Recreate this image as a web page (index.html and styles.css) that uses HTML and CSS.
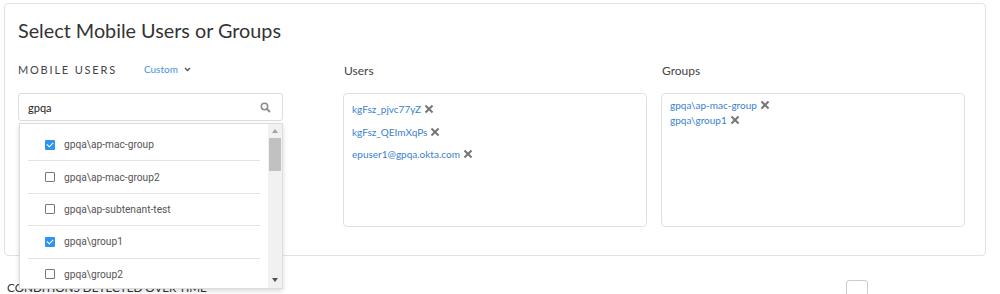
FILE: index.html
```html
<!DOCTYPE html>
<html lang="en">
<head>
    <meta charset="UTF-8">
    <meta name="viewport" content="width=device-width, initial-scale=1.0">
    <title>Select Mobile Users or Groups</title>
    <link rel="stylesheet" href="styles.css">
</head>
<body>

    <div class="card">
        <h2>Select Mobile Users or Groups</h2>

        <div class="columns">
            <div class="col col-mobile">
                <div class="label-row">
                    <span class="caps-label">MOBILE USERS</span>
                    <span class="custom">Custom
                        <svg width="7" height="5" viewBox="0 0 7 5"><path d="M1 1l2.5 2.5L6 1" fill="none" stroke="#555" stroke-width="1.4"/></svg>
                    </span>
                </div>
                <div class="search">
                    <span class="search-text">gpqa</span>
                    <svg width="11" height="11" viewBox="0 0 11 11"><circle cx="4.5" cy="4.5" r="3.2" fill="none" stroke="#8a8a8a" stroke-width="1.5"/><path d="M7 7l3 3" stroke="#8a8a8a" stroke-width="1.8"/></svg>
                </div>

                <div class="dropdown">
                    <div class="dd-list">
                        <div class="dd-row"><span class="check on"></span>gpqa\ap-mac-group</div>
                        <div class="dd-row"><span class="check"></span>gpqa\ap-mac-group2</div>
                        <div class="dd-row"><span class="check"></span>gpqa\ap-subtenant-test</div>
                        <div class="dd-row"><span class="check on"></span>gpqa\group1</div>
                        <div class="dd-row"><span class="check"></span>gpqa\group2</div>
                    </div>
                    <div class="dd-scroll">
                        <span class="arrow up"></span>
                        <span class="thumb"></span>
                        <span class="track"></span>
                        <span class="arrow down"></span>
                    </div>
                </div>
            </div>

            <div class="col">
                <div class="label-row"><span class="col-label">Users</span></div>
                <div class="box users">
                    <div class="tag">kgFsz_pjvc77yZ <span class="x"></span></div>
                    <div class="tag">kgFsz_QEImXqPs <span class="x"></span></div>
                    <div class="tag">epuser1@gpqa.okta.com <span class="x"></span></div>
                </div>
            </div>

            <div class="col">
                <div class="label-row"><span class="col-label">Groups</span></div>
                <div class="box groups">
                    <div class="tag">gpqa\ap-mac-group <span class="x"></span></div>
                    <div class="tag">gpqa\group1 <span class="x"></span></div>
                </div>
            </div>
        </div>
    </div>

    <div class="below">
        <span class="section-title">CONDITIONS DETECTED OVER TIME</span>
        <span class="small-btn"></span>
    </div>

</body>
</html>
```

FILE: styles.css
```css
* {
    margin: 0;
    padding: 0;
    box-sizing: border-box;
}

body {
    background: white;
    font-family: Lato, "Open Sans", sans-serif;
    color: #333;
    overflow: hidden;
    height: 294px;
}

.card {
    margin: 3px 14px 0 4px;
    padding: 14px 20px 28px 13px;
    border: 1px solid #e2e2e2;
    border-radius: 4px;
}

h2 {
    font-size: 19.8px;
    font-weight: 400;
    line-height: 24px;
    color: #333;
}

.columns {
    display: grid;
    grid-template-columns: 325px 318px 304px;
    margin-top: 19px;
}

.col-mobile {
    position: relative;
}

.label-row {
    display: flex;
    align-items: center;
    height: 16px;
    margin-bottom: 16px;
}

.caps-label {
    font-size: 11px;
    letter-spacing: 1.8px;
    color: #444;
}

.custom {
    margin-left: 27px;
    font-size: 10px;
    color: #4a90e2;
    display: flex;
    align-items: center;
    gap: 6px;
}

.col-label {
    font-size: 12px;
    color: #444;
    padding-left: 1px;
    margin-top: 2px;
}

.search {
    width: 265px;
    height: 28px;
    margin-top: 1px;
    border: 1px solid #ddd;
    border-radius: 3px;
    display: flex;
    align-items: center;
    justify-content: space-between;
    padding: 0 11px 0 9px;
}

.search-text {
    font-size: 11px;
    color: #222;
}

.dropdown {
    position: absolute;
    left: 1px;
    top: 62px;
    width: 264px;
    height: 166px;
    background: white;
    border: 1px solid #ddd;
    box-shadow: 0 2px 5px rgba(0, 0, 0, 0.15);
    display: flex;
    z-index: 2;
}

.dd-list {
    flex: 1;
    overflow: hidden;
    padding-top: 5px;
}

.dd-row {
    height: 32.4px;
    margin: 0 8px;
    border-bottom: 1px solid #e3e3e3;
    display: flex;
    align-items: center;
    padding-left: 17px;
    font-family: Roboto, sans-serif;
    font-size: 10.2px;
    color: #555;
}

.check {
    width: 10px;
    height: 10px;
    margin-right: 9px;
    border: 1.5px solid #777;
    border-radius: 1px;
    position: relative;
}

.check.on {
    border: none;
    background: #2d95f0;
}

.check.on::after {
    content: "";
    position: absolute;
    left: 3px;
    top: 1px;
    width: 3px;
    height: 5px;
    border: solid white;
    border-width: 0 1.5px 1.5px 0;
    transform: rotate(45deg);
}

.dd-scroll {
    width: 14px;
    background: #f1f1f1;
    display: flex;
    flex-direction: column;
    align-items: center;
}

.arrow {
    width: 0;
    height: 0;
    border-left: 3.5px solid transparent;
    border-right: 3.5px solid transparent;
}

.arrow.up {
    border-bottom: 4px solid #a3a3a3;
    margin: 5px 0 5px;
}

.arrow.down {
    border-top: 4px solid #505050;
    margin: 5px 0 6px;
}

.thumb {
    width: 12px;
    height: 33px;
    background: #c1c1c1;
}

.track {
    flex: 1;
}

.box {
    width: 304px;
    height: 134px;
    border: 1px solid #e0e0e0;
    border-radius: 4px;
}

.users {
    padding: 4px 8px;
}

.groups {
    padding: 3px 8px;
}

.tag {
    font-size: 10px;
    color: #3a7fcf;
    display: flex;
    align-items: center;
    gap: 4px;
}

.users .tag {
    height: 22.5px;
}

.groups .tag {
    height: 15px;
}

.x {
    width: 8px;
    height: 8px;
    position: relative;
}

.x::before,
.x::after {
    content: "";
    position: absolute;
    left: 3px;
    top: -1px;
    width: 2px;
    height: 10px;
    background: #777;
    transform: rotate(45deg);
}

.x::after {
    transform: rotate(-45deg);
}

.below {
    display: flex;
    align-items: flex-start;
    margin-top: 24px;
    padding-left: 7px;
}

.section-title {
    font-size: 11.7px;
    color: #333;
    line-height: 15px;
}

.small-btn {
    margin-left: auto;
    margin-right: 132px;
    width: 22px;
    height: 24px;
    border: 1px solid #ccc;
    border-radius: 3px;
}
```
